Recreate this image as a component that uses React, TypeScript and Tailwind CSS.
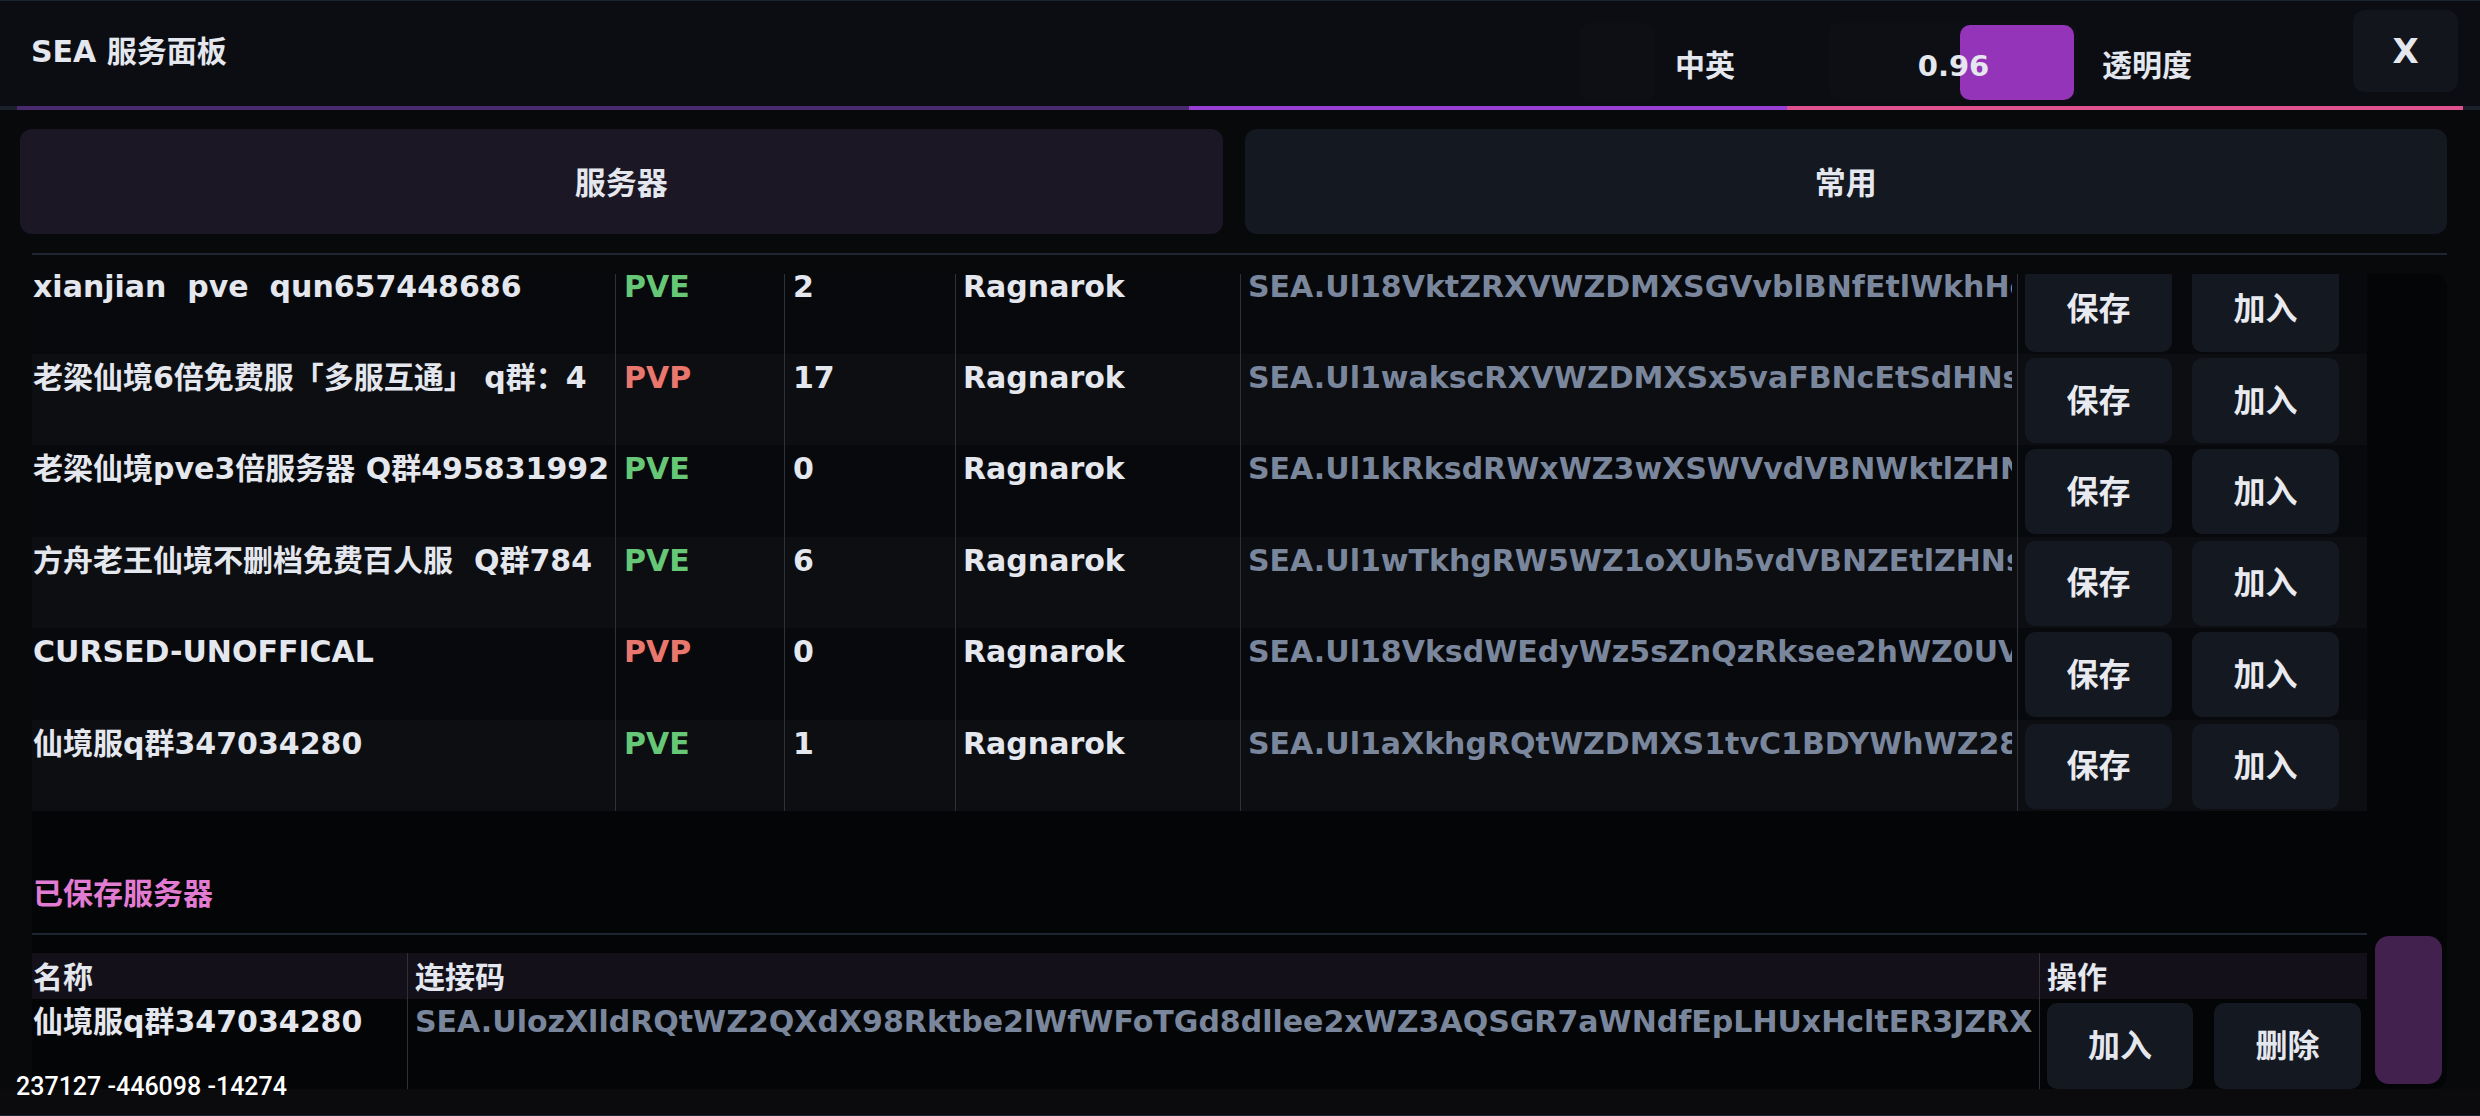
import React from "react";

type Row = { name: string; mode: "PVE" | "PVP"; players: number; map: string; code: string };

const rows: Row[] = [
  { name: "xianjian  pve  qun657448686", mode: "PVE", players: 2, map: "Ragnarok", code: "SEA.Ul18VktZRXVWZDMXSGVvblBNfEtlWkhHcWtZRkd8" },
  { name: "老梁仙境6倍免费服「多服互通」 q群：4", mode: "PVP", players: 17, map: "Ragnarok", code: "SEA.Ul1wakscRXVWZDMXSx5vaFBNcEtSdHNsR1dZWk" },
  { name: "老梁仙境pve3倍服务器 Q群495831992", mode: "PVE", players: 0, map: "Ragnarok", code: "SEA.Ul1kRksdRWxWZ3wXSWVvdVBNWktlZHNkW0pXa" },
  { name: "方舟老王仙境不删档免费百人服  Q群784", mode: "PVE", players: 6, map: "Ragnarok", code: "SEA.Ul1wTkhgRW5WZ1oXUh5vdVBNZEtlZHNsQ2hWa" },
  { name: "CURSED-UNOFFICAL", mode: "PVP", players: 0, map: "Ragnarok", code: "SEA.Ul18VksdWEdyWz5sZnQzRksee2hWZ0UVa3dZb" },
  { name: "仙境服q群347034280", mode: "PVE", players: 1, map: "Ragnarok", code: "SEA.Ul1aXkhgRQtWZDMXS1tvC1BDYWhWZ28Wd1hZe" },
];

const savedCode =
  "SEA.UlozXlldRQtWZ2QXdX98Rktbe2lWfWFoTGd8dllee2xWZ3AQSGR7aWNdfEpLHUxHcltER3JZRXdWa2";

function ActionButton({ label }: { label: string }) {
  return (
    <button className="flex h-[85px] w-[147px] shrink-0 items-center justify-center rounded-[10px] bg-[#141820] text-[32px] leading-[40px] text-[#e8eaef]">
      {label}
    </button>
  );
}

export default function App() {
  return (
    <div className="relative flex h-[1116px] w-[2480px] flex-col overflow-hidden bg-[#08090b] font-['DejaVu_Sans','Noto_Sans_CJK_SC',sans-serif] font-bold text-[#e4e7ed]">
      {/* Title bar */}
      <div className="flex h-[106px] shrink-0 items-start border-t border-[#1c2430] bg-[#0b0d13]">
        <div className="ml-[31px] mt-[31px] text-[30px] leading-[40px]">SEA 服务面板</div>
        <div className="ml-auto mr-[22px] flex items-start">
          <div className="mt-[22px] h-[77px] w-[75px] rounded-[10px] bg-[#0d0f15]" />
          <div className="ml-[20px] mt-[45px] w-[154px] text-[30px] leading-[40px]">中英</div>
          <div className="relative mt-[22px] flex h-[77px] w-[249px] items-center justify-center rounded-[10px] bg-[#0d0f15]">
            <div className="absolute bottom-[0px] right-[4px] top-[2px] w-[114px] rounded-[10px] bg-[#9434b8]" />
            <span className="relative mt-[8px] text-[29px] leading-[40px]">0.96</span>
          </div>
          <div className="ml-[24px] mt-[45px] w-[251px] text-[30px] leading-[40px]">透明度</div>
          <button className="mt-[9px] flex h-[82px] w-[105px] items-center justify-center rounded-[12px] bg-[#12151c] text-[34px] leading-[40px]">
            X
          </button>
        </div>
      </div>

      {/* Accent line */}
      <div className="flex h-[4px] shrink-0 bg-[#1a212b] px-[17px]">
        <div className="w-[1172px] bg-[#4a2a6e]" />
        <div className="w-[598px] bg-[#9a3fd6]" />
        <div className="flex-1 bg-[#e0518f]" />
      </div>

      {/* Tabs */}
      <div className="mt-[19px] grid h-[105px] shrink-0 grid-cols-2 gap-[22px] pl-[20px] pr-[33px]">
        <button className="flex items-center justify-center rounded-[12px] bg-[#1b1725] pt-[2px] text-[31px] leading-[40px]">
          服务器
        </button>
        <button className="flex items-center justify-center rounded-[12px] bg-[#141820] pt-[2px] text-[31px] leading-[40px]">
          常用
        </button>
      </div>

      <div className="ml-[32px] mr-[33px] mt-[19px] h-[2px] shrink-0 bg-[#1d2631]" />

      {/* Scroll area */}
      <div className="ml-[32px] mr-[33px] mt-[19px] flex h-[815px] shrink-0 overflow-hidden rounded-[14px] bg-[#040506]">
        <div className="mt-[-11.4px] flex w-[2335px] shrink-0 flex-col">
          {rows.map((r, i) => (
            <div
              key={i}
              className={`flex h-[91.4px] shrink-0 ${i % 2 === 0 ? "bg-[#08090c]" : "bg-[#0c0e12]"}`}
            >
              <div className="w-[583px] shrink-0 overflow-hidden whitespace-pre pl-[1px] pt-[4px] text-[30px] leading-[40px]">
                {r.name}
              </div>
              <div
                className={`w-[169px] shrink-0 border-l border-[#2e3138] pl-[8px] pt-[4px] text-[30px] leading-[40px] ${
                  r.mode === "PVE" ? "text-[#66c777]" : "text-[#e9776d]"
                }`}
              >
                {r.mode}
              </div>
              <div className="w-[171px] shrink-0 border-l border-[#2e3138] pl-[8px] pt-[4px] text-[30px] leading-[40px]">
                {r.players}
              </div>
              <div className="w-[285px] shrink-0 border-l border-[#2e3138] pl-[7px] pt-[4px] text-[30px] leading-[40px]">
                {r.map}
              </div>
              <div className="w-[777px] shrink-0 border-l border-[#2e3138] pl-[7px] pr-[5px] pt-[4px]">
                <div className="overflow-hidden whitespace-nowrap text-[30px] leading-[40px] text-[#7a869c]">{r.code}</div>
              </div>
              <div className="flex flex-1 gap-[20px] border-l border-[#2e3138] pl-[7px] pt-[4px]">
                <ActionButton label="保存" />
                <ActionButton label="加入" />
              </div>
            </div>
          ))}

          {/* Saved servers */}
          <div className="mt-[63px] pl-[1px] text-[30px] leading-[40px] text-[#e27bd2]">已保存服务器</div>
          <div className="mt-[19px] h-[2px] shrink-0 bg-[#1b2630]" />

          <div className="mt-[18px] flex h-[46px] shrink-0 items-center bg-[#13101a] text-[30px] leading-[40px]">
            <div className="flex h-full w-[375px] shrink-0 items-center pl-[1px] pt-[5px]">名称</div>
            <div className="flex h-full w-[1632px] shrink-0 items-center border-l border-[#2e3138] pl-[7px] pt-[5px]">连接码</div>
            <div className="flex h-full flex-1 items-center border-l border-[#2e3138] pl-[7px] pt-[5px]">操作</div>
          </div>

          <div className="flex h-[90px] shrink-0 text-[30px] leading-[40px]">
            <div className="w-[375px] shrink-0 overflow-hidden whitespace-nowrap pl-[1px] pt-[3px]">仙境服q群347034280</div>
            <div className="w-[1632px] shrink-0 border-l border-[#2e3138] pl-[7px] pr-[7px] pt-[3px]">
              <div className="overflow-hidden whitespace-nowrap text-[#7a869c]">{savedCode}</div>
            </div>
            <div className="flex flex-1 gap-[21px] border-l border-[#2e3138] pl-[7px] pt-[4px]">
              <button className="flex h-[86px] w-[146px] shrink-0 items-center justify-center rounded-[10px] bg-[#141820] text-[32px]">
                加入
              </button>
              <button className="flex h-[86px] w-[147px] shrink-0 items-center justify-center rounded-[10px] bg-[#141820] text-[32px]">
                删除
              </button>
            </div>
          </div>
        </div>

        {/* Scrollbar */}
        <div className="flex flex-1 flex-col justify-end pb-[5px] pl-[8px] pr-[5px]">
          <div className="h-[148px] rounded-[14px] bg-[#42214f]" />
        </div>
      </div>

      <div className="flex-1 border-b border-[#1a2430] bg-[#0b0b0e]" />

      {/* World coordinates overlay */}
      <div className="absolute bottom-[14px] left-[16px] font-['Roboto',sans-serif] text-[25px] font-medium leading-[30px] text-white">
        237127 -446098 -14274
      </div>
    </div>
  );
}
